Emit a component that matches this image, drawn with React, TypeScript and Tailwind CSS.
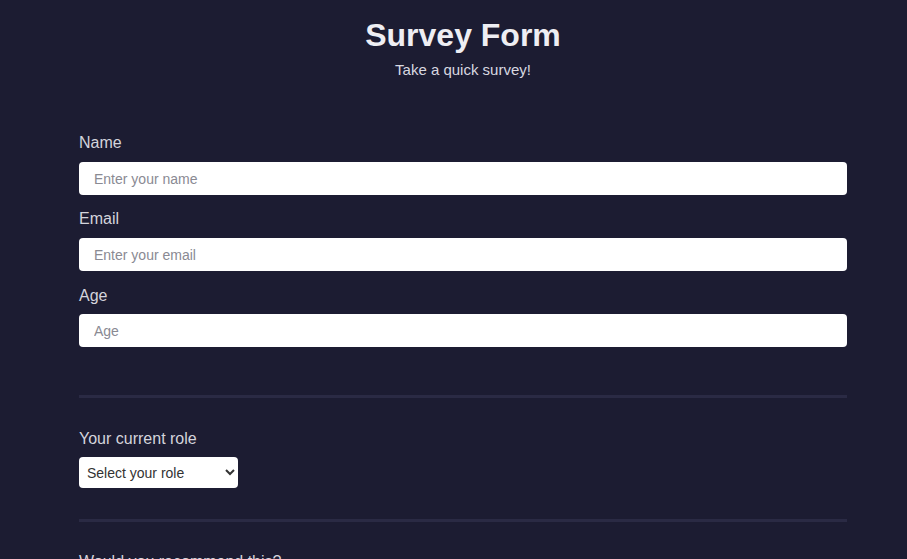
import React from "react";

export default function App() {
  return (
    <div
      className="min-h-screen w-full bg-[#1c1c32] text-[#f0f0f5] overflow-hidden"
      style={{ fontFamily: '"Liberation Sans", Arial, sans-serif' }}
    >
      <div className="h-[559px] overflow-hidden">
        <div className="pl-[79px] w-[847px]">
          <header className="pt-[17px] text-center">
            <h1 className="text-[32px] leading-[37px] font-bold text-[#eeeef3]">Survey Form</h1>
            <p className="mt-[7px] text-[15px] leading-[18px] text-[#d8d8e0]">Take a quick survey!</p>
          </header>

          <form className="mt-[55px]">
            <fieldset className="flex flex-col">
              <label className="text-[16px] leading-[18px] text-[#d4d4dc]">Name</label>
              <input
                type="text"
                placeholder="Enter your name"
                className="mt-[10px] h-[33px] w-full rounded-[4px] bg-white px-[15px] text-[14px] text-[#222] placeholder:text-[#8a8a93] outline-none"
              />
              <label className="mt-[15px] text-[16px] leading-[18px] text-[#d4d4dc]">Email</label>
              <input
                type="email"
                placeholder="Enter your email"
                className="mt-[10px] h-[33px] w-full rounded-[4px] bg-white px-[15px] text-[14px] text-[#222] placeholder:text-[#8a8a93] outline-none"
              />
              <label className="mt-[16px] text-[16px] leading-[18px] text-[#d4d4dc]">Age</label>
              <input
                type="number"
                placeholder="Age"
                className="mt-[9px] h-[33px] w-full rounded-[4px] bg-white px-[15px] text-[14px] text-[#222] placeholder:text-[#8a8a93] outline-none"
              />
            </fieldset>

            <div className="mt-[48px] h-[3px] w-full bg-[#2a2a44]" />

            <fieldset className="mt-[32px] flex flex-col items-start">
              <label className="text-[16px] leading-[18px] text-[#d4d4dc]">Your current role</label>
              <select
                defaultValue=""
                className="mt-[9px] h-[31px] w-[159px] rounded-[4px] bg-white pl-[4px] text-[14px] text-[#333] outline-none"
              >
                <option value="" disabled>
                  Select your role
                </option>
                <option>Student</option>
                <option>Full Time Job</option>
                <option>Full Time Learner</option>
                <option>Prefer not to say</option>
                <option>Other</option>
              </select>
            </fieldset>

            <div className="mt-[31px] h-[3px] w-full bg-[#2a2a44]" />

            <fieldset className="mt-[31px] flex flex-col">
              <label className="text-[16px] leading-[18px] text-[#d4d4dc]">Would you recommend this?</label>
            </fieldset>
          </form>
        </div>
      </div>
    </div>
  );
}
